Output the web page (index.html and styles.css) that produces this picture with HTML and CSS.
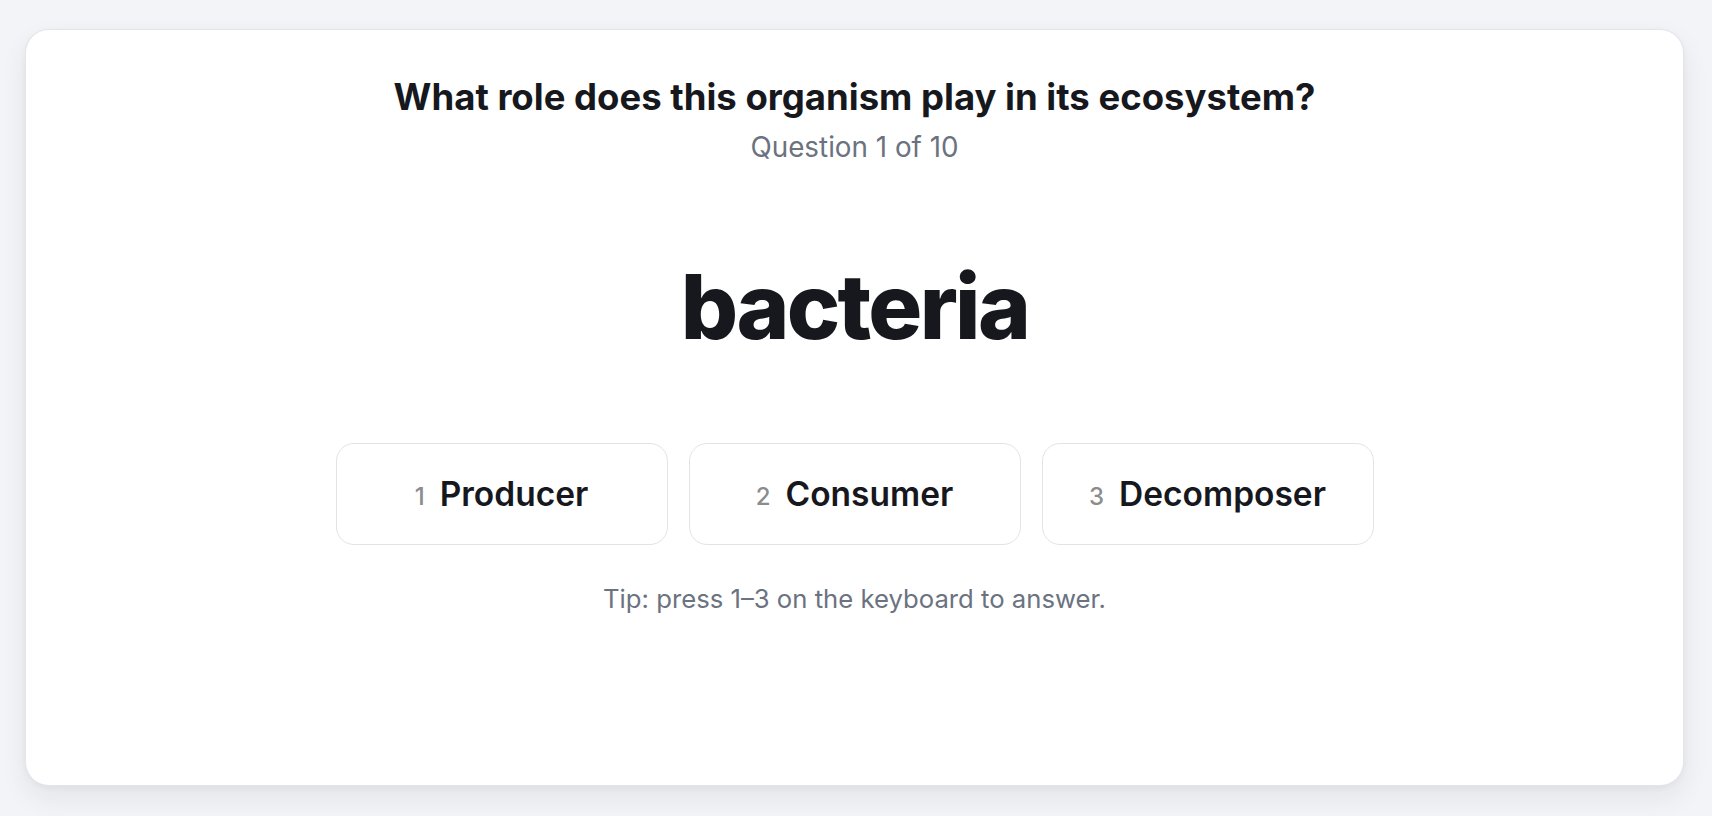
FILE: index.html
```html
<!DOCTYPE html>
<html lang="en">
<head>
<meta charset="utf-8">
<title>Quiz</title>
<link rel="stylesheet" href="styles.css">
</head>
<body>
<main class="card">
  <h1 class="title">What role does this organism play in its ecosystem?</h1>
  <p class="progress">Question 1 of 10</p>
  <div class="term">bacteria</div>
  <div class="options">
    <button class="option"><span class="key">1</span><span class="label">Producer</span></button>
    <button class="option"><span class="key">2</span><span class="label">Consumer</span></button>
    <button class="option"><span class="key">3</span><span class="label">Decomposer</span></button>
  </div>
  <p class="tip">Tip: press 1–3 on the keyboard to answer.</p>
</main>
</body>
</html>
```
FILE: styles.css
```css
* { box-sizing: border-box; }
html, body { margin: 0; }
body {
  background: #f3f4f7;
  font-family: Inter, "Noto Sans", "Liberation Sans", sans-serif;
  padding: 29px 28px 30px 25px;
  color: #16181d;
}
.card {
  height: 757px;
  background: #ffffff;
  border: 1px solid #e3e5e9;
  border-radius: 24px;
  box-shadow: 0 12px 28px rgba(20, 30, 50, 0.07), 0 2px 6px rgba(20, 30, 50, 0.04);
  display: flex;
  flex-direction: column;
  align-items: center;
  padding-top: 48px;
}
.title {
  margin: 0;
  font-size: 36.5px;
  line-height: 38px;
  font-weight: 700;
  letter-spacing: 0;
  color: #16181d;
}
.progress {
  margin: 16px 0 0;
  font-size: 27.8px;
  line-height: 31px;
  color: #6b7280;
}
.term {
  margin-top: 95px;
  font-size: 90px;
  line-height: 97px;
  font-weight: 800;
  letter-spacing: -0.03em;
  color: #16181d;
}
.options {
  margin-top: 88px;
  display: flex;
  gap: 21px;
}
.option {
  width: 332px;
  height: 102px;
  background: #ffffff;
  border: 1.5px solid #e1e3e7;
  border-radius: 18px;
  display: flex;
  align-items: center;
  justify-content: center;
  gap: 15px;
  font-family: inherit;
  cursor: pointer;
  padding: 0;
}
.key {
  font-size: 24px;
  font-weight: 500;
  color: #8c8c8f;
  margin-top: 4px;
}
.label {
  font-size: 33.5px;
  font-weight: 600;
  color: #16181d;
  letter-spacing: 0;
}
.tip {
  margin: 40px 0 0;
  font-size: 25.7px;
  line-height: 28px;
  color: #6b7280;
}
```
